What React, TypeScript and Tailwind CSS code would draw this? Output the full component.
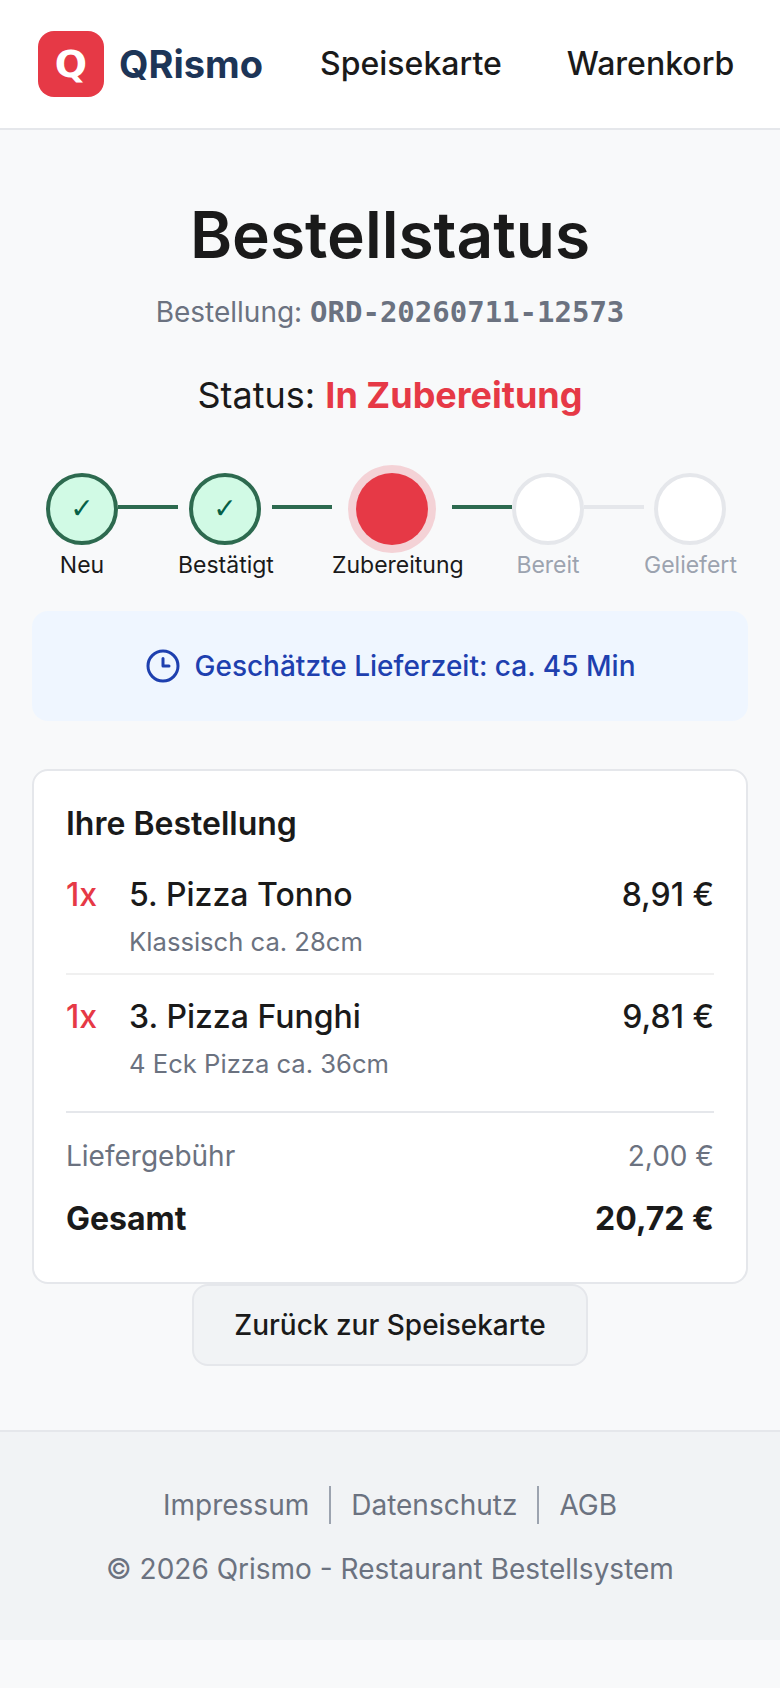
const steps = [
  { label: 'Neu', box: 'w-[72px]', state: 'done' },
  { label: 'Bestätigt', box: 'w-[94px]', state: 'done' },
  { label: 'Zubereitung', box: 'w-[120px]', state: 'active' },
  { label: 'Bereit', box: 'w-[72px]', state: 'open' },
  { label: 'Geliefert', box: 'w-[92px]', state: 'open' },
];

const items = [
  { name: '5. Pizza Tonno', size: 'Klassisch ca. 28cm', price: '8,91 €' },
  { name: '3. Pizza Funghi', size: '4 Eck Pizza ca. 36cm', price: '9,81 €' },
];

function Step({ label, box, state }: { label: string; box: string; state: string }) {
  return (
    <div className={`flex shrink-0 flex-col ${box}`}>
      <div className="flex justify-center">
        {state === 'done' && (
          <div className="flex h-[72px] w-[72px] items-center justify-center rounded-full border-4 border-[#2d6a4f] bg-[#d1fae5] font-['DejaVu_Sans',sans-serif] text-[28px] text-[#065f46]">
            ✓
          </div>
        )}
        {state === 'active' && (
          <div className="h-[72px] w-[72px] rounded-full bg-[#e63946] shadow-[0_0_0_8px_rgba(230,57,70,0.2)]" />
        )}
        {state === 'open' && <div className="h-[72px] w-[72px] rounded-full border-4 border-[#e5e7eb] bg-white" />}
      </div>
      <span
        className={`mt-[3px] whitespace-nowrap text-center text-[23px] leading-[34px] ${
          state === 'open' ? 'text-[#9ca3af]' : 'text-[#1a1a1a]'
        }`}
      >
        {label}
      </span>
    </div>
  );
}

export default function App() {
  return (
    <div className="min-h-screen bg-[#f8f9fa] font-['Inter',sans-serif] text-[#1a1a1a]">
      <header className="flex h-[130px] items-center border-b-2 border-[#e5e7eb] bg-white pl-[38px]">
        <div className="flex items-center gap-[15px]">
          <div className="flex h-[66px] w-[66px] items-center justify-center rounded-2xl bg-[#e63946] font-['DejaVu_Sans',sans-serif] text-[38px] font-bold text-white">
            Q
          </div>
          <span className="text-[38px] font-bold text-[#1d3557]">QRismo</span>
        </div>
        <nav className="ml-[57px] flex gap-[65px] text-[32px] font-medium">
          <span>Speisekarte</span>
          <span>Warenkorb</span>
        </nav>
      </header>

      <main className="px-8 pt-[66px]">
        <h1 className="text-center text-[64px] font-semibold leading-[77px] text-[#1a1a1a]">Bestellstatus</h1>
        <p className="mt-[18px] text-center text-[28px] text-[#6b7280]">
          Bestellung:{' '}
          <span className="font-['DejaVu_Sans_Mono',monospace] text-[29px] font-bold">ORD-20260711-12573</span>
        </p>
        <p className="mt-[33px] text-center text-[36px]">
          Status: <span className="font-bold text-[#e63946]">In Zubereitung</span>
        </p>

        <div className="mt-[51px] flex items-start pl-[14px]">
          {steps.map((step, i) => (
            <div key={step.label} className="flex items-start">
              <Step {...step} />
              {i < steps.length - 1 && (
                <div className={`mt-8 h-1 w-[60px] shrink-0 ${i < 3 ? 'bg-[#2d6a4f]' : 'bg-[#e5e7eb]'}`} />
              )}
            </div>
          ))}
        </div>

        <div className="mt-[29px] flex h-[110px] items-center justify-center gap-[14px] rounded-2xl bg-[#eff6ff] text-[28px] font-medium text-[#1e40af]">
          <svg width="36" height="36" viewBox="0 0 24 24" fill="none" stroke="currentColor" strokeWidth="2" strokeLinecap="round" strokeLinejoin="round">
            <circle cx="12" cy="12" r="10" />
            <path d="M12 7v5h4" />
          </svg>
          <span>Geschätzte Lieferzeit: ca. 45 Min</span>
        </div>

        <section className="mt-12 rounded-2xl border-2 border-[#e5e7eb] bg-white px-8 pb-[39px] pt-[34px]">
          <h2 className="text-[32px] font-semibold leading-[38px]">Ihre Bestellung</h2>
          <div className="mt-[10px]">
            {items.map((item, i) => (
              <div key={item.name} className={`flex justify-between pb-3 pt-[18px] ${i === 0 ? 'border-b-2 border-[#f0f0f0]' : ''}`}>
                <div className="flex gap-8">
                  <span className="text-[32px] font-medium text-[#e63946]">1x</span>
                  <div>
                    <div className="text-[32px] font-medium">{item.name}</div>
                    <div className="mt-1 text-[25.6px] text-[#6b7280]">{item.size}</div>
                  </div>
                </div>
                <span className="text-[32px] font-medium">{item.price}</span>
              </div>
            ))}
          </div>
          <div className="mt-4 border-t-2 border-[#e5e7eb] pt-[22px]">
            <div className="flex justify-between text-[28px] text-[#6b7280]">
              <span>Liefergebühr</span>
              <span>2,00 €</span>
            </div>
            <div className="mt-[18px] flex justify-between text-[32px] font-bold">
              <span>Gesamt</span>
              <span>20,72 €</span>
            </div>
          </div>
        </section>

        <div className="flex justify-center">
          <button className="h-[82px] w-[396px] rounded-2xl border-2 border-[#e5e7eb] bg-[#f1f3f5] text-[28px] font-medium">
            Zurück zur Speisekarte
          </button>
        </div>
      </main>

      <footer className="mt-16 h-[210px] border-t-2 border-[#e5e7eb] bg-[#f1f3f5] pt-[54px] text-[#6b7280]">
        <div className="flex items-center justify-center text-[28px] leading-[38px]">
          <span className="pr-5">Impressum</span>
          <span className="border-l-2 border-[#9ca3af] px-5">Datenschutz</span>
          <span className="border-l-2 border-[#9ca3af] pl-5">AGB</span>
        </div>
        <p className="mt-6 text-center text-[28px]">© 2026 Qrismo - Restaurant Bestellsystem</p>
      </footer>
    </div>
  );
}
